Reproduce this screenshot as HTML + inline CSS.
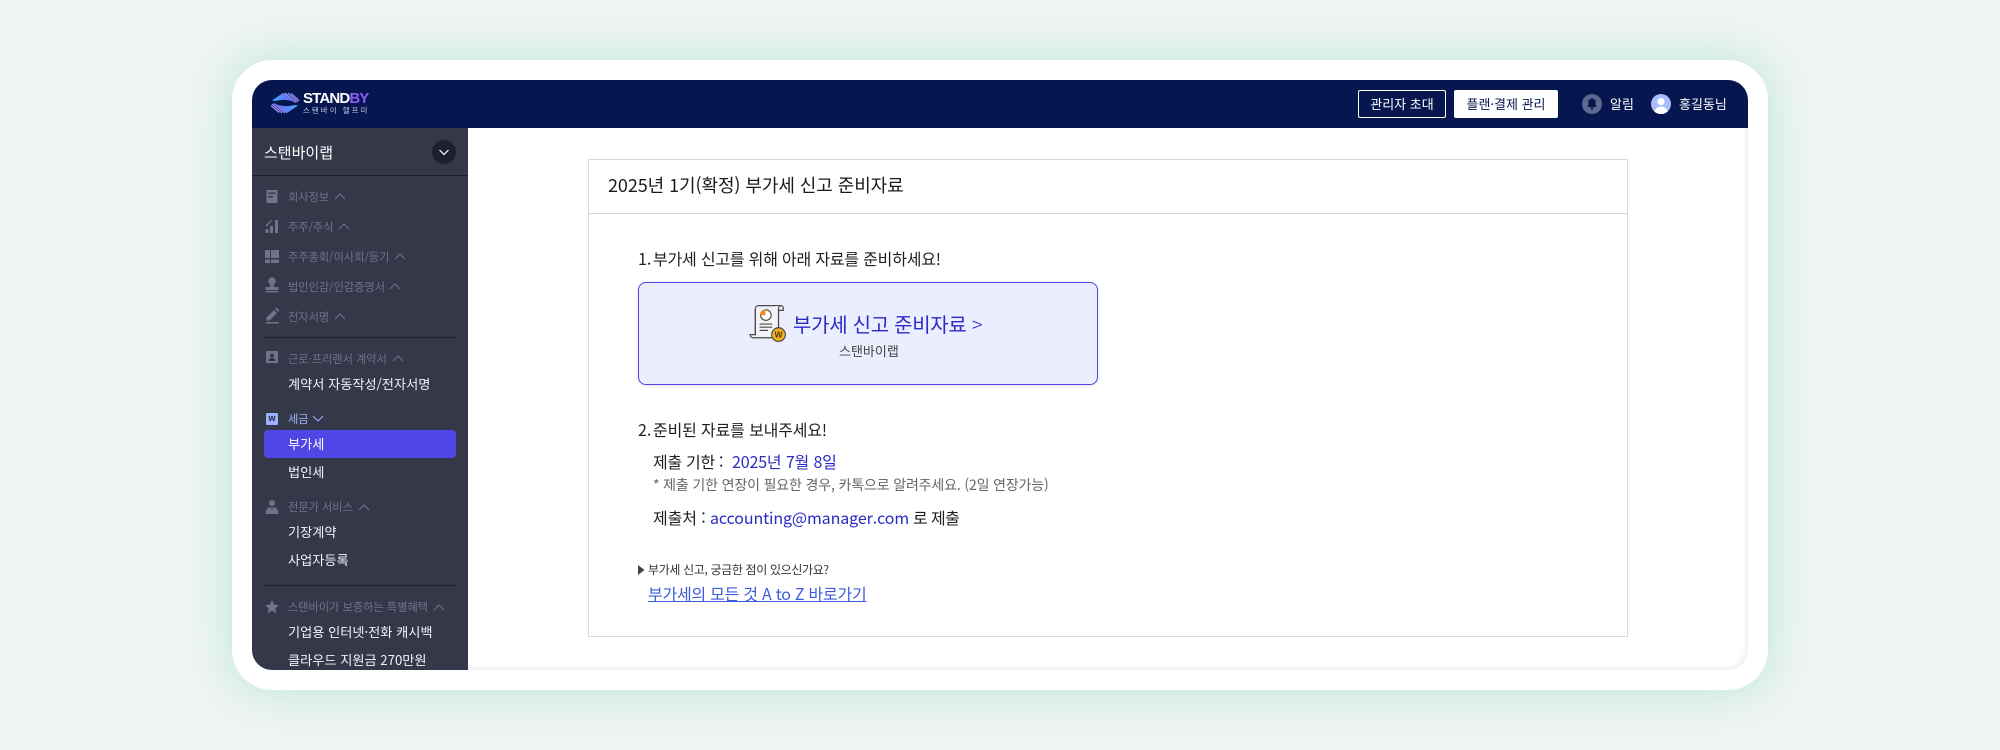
<!DOCTYPE html>
<html lang="ko"><head><meta charset="utf-8"><title>STANDBY</title>
<style>
*{box-sizing:border-box;margin:0;padding:0}
html,body{width:2000px;height:750px;overflow:hidden;background:#eef4f2;font-family:"Noto Sans CJK KR","Liberation Sans",sans-serif}
.a{position:absolute}
.t{position:absolute;white-space:nowrap;line-height:24px;height:24px}
#card{position:absolute;left:232px;top:60px;width:1536px;height:630px;background:#fff;border-radius:40px;box-shadow:0 0 40px 6px #c6e8e2}
#panel{position:absolute;left:252px;top:80px;width:1496px;height:590px;background:#fff;border-radius:20px}
#shade{position:absolute;left:252px;top:80px;width:1496px;height:590px;border-radius:20px;box-shadow:inset -2px -2px 6px rgba(0,0,0,.07);pointer-events:none}
#hd{position:absolute;left:252px;top:80px;width:1496px;height:48px;background:#06174f;border-radius:20px 20px 0 0}
#sb{position:absolute;left:252px;top:128px;width:216px;height:542px;background:#343849;border-radius:0 0 0 20px}
.m{font-size:11.2px;color:#6f7488;left:288px}
.s{font-size:13.2px;color:#f2f3f6;left:288px}
.dv{position:absolute;left:264px;width:192px;height:1px;background:#1e2130}
.c{font-size:16px;color:#1f1f1f}
</style></head><body>
<div id="card"></div>
<div id="panel"></div>
<div id="shade"></div>
<div id="sb"></div>
<div id="hd"></div>

<!-- logo -->
<svg class="a" style="left:270px;top:90px" width="30" height="26" viewBox="0 0 30 26">
<defs><linearGradient id="g" x1="0" y1="0" x2="1" y2="0"><stop offset="0" stop-color="#45b0ff"/><stop offset="1" stop-color="#6f5cf0"/></linearGradient></defs>
<path d="M2 10.500 L13 3 L17 5 L24 12 C18 9.500 12 9.500 8 10.500 C6 11 4 11 2 10.500Z" fill="url(#g)"/>
<path d="M15 3 L26 12.500 M18 3 L28 12 M21 3.500 L29 10.500" stroke="#9a8af0" stroke-width="1.300" fill="none"/>
<g transform="rotate(180 15 13)"><path d="M2 10.500 L13 3 L17 5 L24 12 C18 9.500 12 9.500 8 10.500 C6 11 4 11 2 10.500Z" fill="url(#g)"/>
<path d="M15 3 L26 12.500 M18 3 L28 12 M21 3.500 L29 10.500" stroke="#9a8af0" stroke-width="1.300" fill="none"/></g>
</svg>
<div class="t" style="left:303px;top:87px;font:700 15px/24px 'Liberation Sans',sans-serif;color:#fff;letter-spacing:-.85px">STAND<span style="color:#8b5cf6">BY</span></div>
<div class="t" style="left:303px;top:99px;font-size:7.500px;color:#c6cbe0;letter-spacing:2px">스탠바이 헬프미</div>

<!-- header right -->
<div class="a" style="left:1358px;top:90px;width:88px;height:28px;border:1px solid #fff;border-radius:2px;color:#fff;font-size:13px;line-height:26px;text-align:center">관리자 초대</div>
<div class="a" style="left:1454px;top:90px;width:104px;height:28px;background:#fff;border-radius:2px;color:#06174f;font-size:13px;line-height:28px;text-align:center">플랜·결제 관리</div>
<svg class="a" style="left:1582px;top:94px" width="20" height="20" viewBox="0 0 20 20"><circle cx="10" cy="10" r="10" fill="#5c6890"/><path d="M10 4.500c-2.300 0-3.600 1.600-3.600 3.800v3L5.400 13h9.200l-1-1.700v-3c0-2.200-1.300-3.800-3.600-3.800z" fill="#06174f"/><circle cx="10" cy="14.400" r="1.300" fill="#06174f"/></svg>
<div class="t" style="left:1610px;top:92px;font-size:13px;color:#fff">알림</div>
<svg class="a" style="left:1651px;top:94px" width="20" height="20" viewBox="0 0 20 20"><circle cx="10" cy="10" r="10" fill="#a9bcff"/><circle cx="10" cy="7.600" r="3.600" fill="#fff"/><path d="M3.400 17.600C4.400 14 7 12.600 10 12.600s5.600 1.400 6.600 5A10 10 0 0 1 10 20a10 10 0 0 1-6.600-2.400z" fill="#fff"/></svg>
<div class="t" style="left:1679px;top:92px;font-size:13px;color:#fff">홍길동님</div>

<!-- sidebar -->
<div class="t" style="left:264px;top:140.500px;font-size:15px;color:#fff">스탠바이랩</div>
<svg class="a" style="left:432px;top:140px" width="24" height="24" viewBox="0 0 24 24"><circle cx="12" cy="12" r="12" fill="#1d2030"/><path d="M7.500 10l4.500 4.500 4.500-4.500" stroke="#fff" stroke-width="1.200" fill="none"/></svg>
<div class="dv" style="left:252px;width:216px;top:175px"></div>

<svg class="a" style="left:264px;top:186px" width="24" height="150" viewBox="0 0 24 150" fill="#6f7488">
<path d="M2.500 4h11v13h-11zM4.500 6.500v1.500h7v-1.500zm0 3.500v1.500h4.500v-1.500z" fill-rule="evenodd"/>
<path d="M1.500 47v-4h3v4zM6 47v-7h3v7zM11 47V34h3v13zM1.500 39.500L7 34l1 .8L2.500 41z"/>
<path d="M1 64h5v8H1zM7 64h8v8H7zM1 73.500h5V77H1zM7 73.500h8V77H7z"/>
<circle cx="8" cy="95" r="3.800"/><path d="M6.500 97.500h3l.6 3.500H14.500v3h-13v-3h4.400zM1.500 105h13v1.500H1.500z"/>
<path d="M2 136h13v1.500H2zM2.500 134.500v-3l7.500-7.500 3 3-7.500 7.500zM11 123l1.500-1.500 3 3L14 126z"/>
</svg>
<div class="t m" style="top:185px">회사정보</div>
<div class="t m" style="top:215px">주주/주식</div>
<div class="t m" style="top:245px">주주총회/이사회/등기</div>
<div class="t m" style="top:275px">법인인감/인감증명서</div>
<div class="t m" style="top:305px">전자서명</div>
<svg class="a" style="left:264px;top:186px" width="204" height="440" viewBox="0 0 204 440" fill="none" stroke="#6f7488" stroke-width="1">
<path d="M71 13l5-5 5 5"/><path d="M75 43l5-5 5 5"/><path d="M131 73l5-5 5 5"/><path d="M126 103l5-5 5 5"/><path d="M71 133l5-5 5 5"/>
<path d="M129 175l5-5 5 5"/>
<path d="M49 230l5 5 5-5" stroke="#9db0ff"/>
<path d="M95 324l5-5 5 5"/>
<path d="M170 424l5-5 5 5"/>
</svg>
<div class="dv" style="top:337px"></div>

<svg class="a" style="left:266px;top:351px" width="12" height="12" viewBox="0 0 12 12"><path d="M0 1a1 1 0 0 1 1-1h10a1 1 0 0 1 1 1v10a1 1 0 0 1-1 1H1a1 1 0 0 1-1-1z" fill="#6f7488"/><circle cx="6" cy="4.500" r="2" fill="#343849"/><path d="M2.500 10c0-2 1.500-3 3.500-3s3.500 1 3.500 3z" fill="#343849"/></svg>
<div class="t m" style="top:347px">근로·프리랜서 계약서</div>
<div class="t s" style="top:372px">계약서 자동작성/전자서명</div>

<div class="a" style="left:266px;top:413px;width:12px;height:12px;background:#9db0ff;border-radius:1px;color:#1d2030;font:700 9px/11px 'Liberation Sans',sans-serif;text-align:center">w</div>
<div class="t m" style="top:407px;color:#9db0ff">세금</div>
<div class="a" style="left:264px;top:430px;width:192px;height:28px;background:#4f46e5;border-radius:4px"></div>
<div class="t s" style="top:432px;color:#fff">부가세</div>
<div class="t s" style="top:460px">법인세</div>

<svg class="a" style="left:265px;top:500px" width="14" height="14" viewBox="0 0 14 14" fill="#6f7488"><circle cx="7" cy="3.200" r="3"/><path d="M0.500 14c0-4 2-6.500 5.500-7l1 4 1-4c3.500.5 5.500 3 5.500 7z"/></svg>
<div class="t m" style="top:495px">전문가 서비스</div>
<div class="t s" style="top:520px">기장계약</div>
<div class="t s" style="top:548px">사업자등록</div>
<div class="dv" style="top:585px"></div>
<svg class="a" style="left:265px;top:600px" width="14" height="14" viewBox="0 0 14 14"><path d="M7 0l2.100 4.500 4.900.600-3.600 3.300 1 4.800L7 10.800 2.600 13.200l1-4.800L0 5.100l4.900-.600z" fill="#6f7488"/></svg>
<div class="t m" style="top:595px">스탠바이가 보증하는 특별혜택</div>
<div class="t s" style="top:620px">기업용 인터넷·전화 캐시백</div>
<div class="a" style="left:252px;top:640px;width:216px;height:30px;overflow:hidden;border-radius:0 0 0 20px"><div class="t s" style="left:36px;top:8px">클라우드 지원금 270만원</div></div>

<!-- main card -->
<div class="a" style="left:588px;top:159px;width:1040px;height:478px;border:1px solid #d9d9d9"></div>
<div class="a" style="left:588px;top:213px;width:1040px;height:1px;background:#d9d9d9"></div>
<div class="t" style="left:608px;top:173px;font-size:18px;color:#1a1a1a;letter-spacing:-.08px">2025년 1기(확정) 부가세 신고 준비자료</div>
<div class="t c" style="left:638px;top:246px">1.</div>
<div class="t c" style="left:653px;top:246px;letter-spacing:-.2px">부가세 신고를 위해 아래 자료를 준비하세요!</div>

<div class="a" style="left:638px;top:282px;width:460px;height:103px;background:#ebeefe;border:1px solid #4f46e5;border-radius:8px;box-shadow:0 1px 3px rgba(0,0,0,.12)"></div>
<svg class="a" style="left:749px;top:303px" width="38" height="40" viewBox="0 0 36 38">
<path d="M6 30V5.500C6 3.500 7.500 2.500 9 2.500H30c1.500 0 2.500 1 2.500 2.500v2H26" fill="none" stroke="#4a4a4a" stroke-width="1.200"/>
<path d="M6 5.500V30H1c0 2 1.500 3 3 3h22c1 0 2-1 2-2V5c0-1.500 1-2.500 2-2.500" fill="#f4f4f6" stroke="#4a4a4a" stroke-width="1.200"/>
<circle cx="16" cy="11.500" r="5" fill="#fff" stroke="#4a4a4a" stroke-width="1.100"/><path d="M15.500 6v5.500H10.500A5 5 0 0 1 15.500 6z" fill="#f08a24"/>
<path d="M10 20h12M10 23h12M10 26h8" stroke="#4a4a4a" stroke-width="1.100"/>
<circle cx="28" cy="30" r="6.500" fill="#f5b021" stroke="#4a4a4a" stroke-width="1.100"/>
<text x="28" y="33" font-size="8" font-weight="700" font-family="Liberation Sans" text-anchor="middle" fill="#4a3a10">W</text>
</svg>
<div class="t" style="left:793px;top:312px;font-size:20px;color:#2a2ac4;letter-spacing:-.3px">부가세 신고 준비자료 <span style="font-weight:300">&gt;</span></div>
<div class="t" style="left:839px;top:339px;font-size:13px;color:#444">스탠바이랩</div>

<div class="t c" style="left:638px;top:417px">2.</div>
<div class="t c" style="left:653px;top:417px;letter-spacing:-.15px">준비된 자료를 보내주세요!</div>
<div class="t c" style="left:653px;top:448.500px;letter-spacing:-.3px">제출 기한 :</div>
<div class="t c" style="left:732px;top:448.500px;color:#2a2ac4;letter-spacing:-.15px">2025년 7월 8일</div>
<div class="t" style="left:653px;top:473px;font-size:14px;color:#666;letter-spacing:-.15px">* 제출 기한 연장이 필요한 경우, 카톡으로 알려주세요. (2일 연장가능)</div>
<div class="t c" style="left:653px;top:505px;letter-spacing:-.1px">제출처 : <span style="color:#2a2ac4">accounting@manager.com</span><span style="letter-spacing:-.6px"> 로 제출</span></div>
<svg class="a" style="left:638px;top:565px" width="7" height="10" viewBox="0 0 7 10"><path d="M0 0l6.500 5L0 10z" fill="#444"/></svg>
<div class="t" style="left:648px;top:558px;font-size:12px;color:#333;letter-spacing:-.35px">부가세 신고, 궁금한 점이 있으신가요?</div>
<div class="t" style="left:648px;top:581px;font-size:16px;color:#3b5bdb;text-decoration:underline;letter-spacing:-.25px">부가세의 모든 것 A to Z 바로가기</div>
</body></html>
